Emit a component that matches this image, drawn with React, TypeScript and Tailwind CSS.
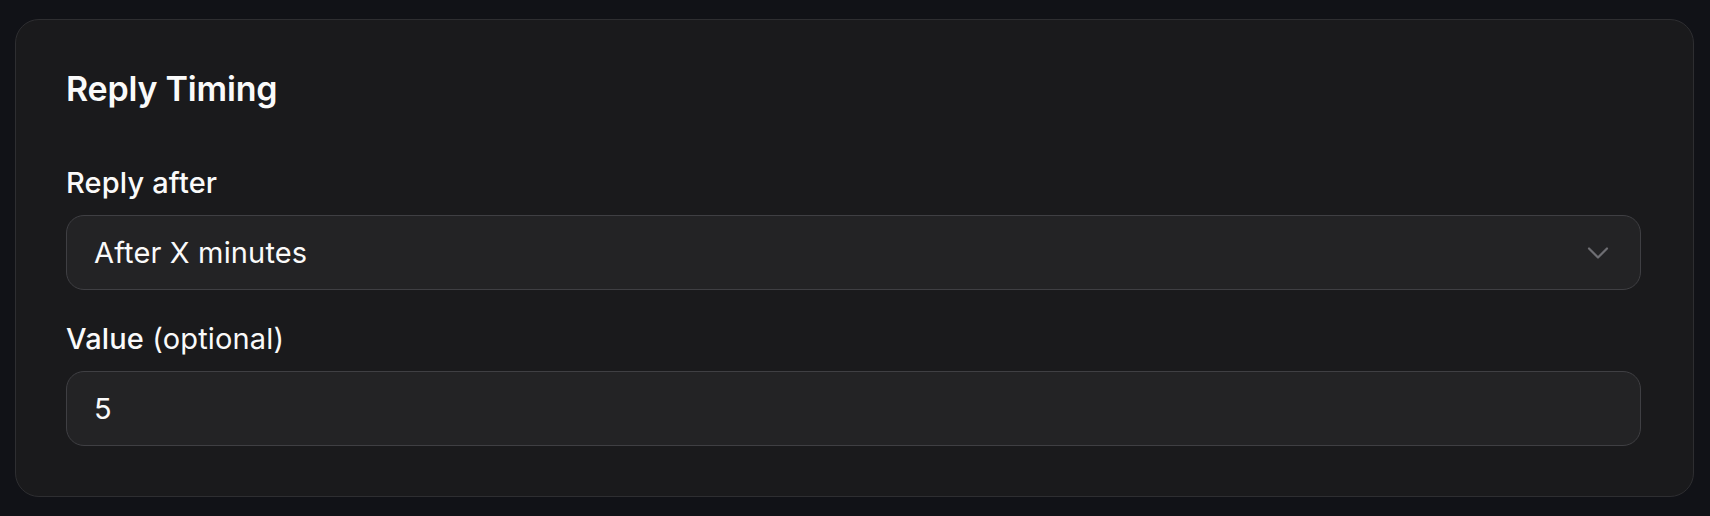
import React from 'react';

const Field = ({ label, hint, children }: { label: string; hint?: string; children: React.ReactNode }) => (
  <div className="flex flex-col">
    <label className="mb-[11px] text-[29px] leading-[42px] tracking-[0.15px] font-medium text-[#fafafa]">
      {label}
      {hint && <span className="font-normal"> {hint}</span>}
    </label>
    {children}
  </div>
);

const ChevronDown = () => (
  <svg width="22" height="14" viewBox="0 0 22 14" fill="none" className="text-[#6e6e73]">
    <path d="M2 2.5l9 9 9-9" stroke="currentColor" strokeWidth="2.2" strokeLinecap="round" strokeLinejoin="round" />
  </svg>
);

export default function App() {
  return (
    <div className="min-h-[516px] bg-[#111217] pt-[19px] pl-[15px] pr-[16px] pb-[19px] font-['Inter','Noto_Sans',sans-serif]">
      <div className="rounded-[24px] border border-[#2e2e31] bg-[#1a1a1c] py-[50px] pl-[50px] pr-[52px]">
        <h2 className="text-[34px] leading-[38px] tracking-[-0.2px] font-semibold text-[#fafafa]">Reply Timing</h2>
        <div className="mt-[54px] flex flex-col gap-[28px]">
          <Field label="Reply after">
            <button className="flex h-[75px] w-full items-center justify-between rounded-[18px] border border-[#3f3f43] bg-[#232325] pl-[27px] pr-[31px] text-left">
              <span className="text-[29px] tracking-[0.15px] font-normal text-[#fafafa]">After X minutes</span>
              <ChevronDown />
            </button>
          </Field>
          <Field label="Value" hint="(optional)">
            <div className="flex h-[75px] w-full items-center rounded-[18px] border border-[#3f3f43] bg-[#232325] pl-[27px]">
              <span className="text-[29px] tracking-[0.15px] font-normal text-[#fafafa]">5</span>
            </div>
          </Field>
        </div>
      </div>
    </div>
  );
}
